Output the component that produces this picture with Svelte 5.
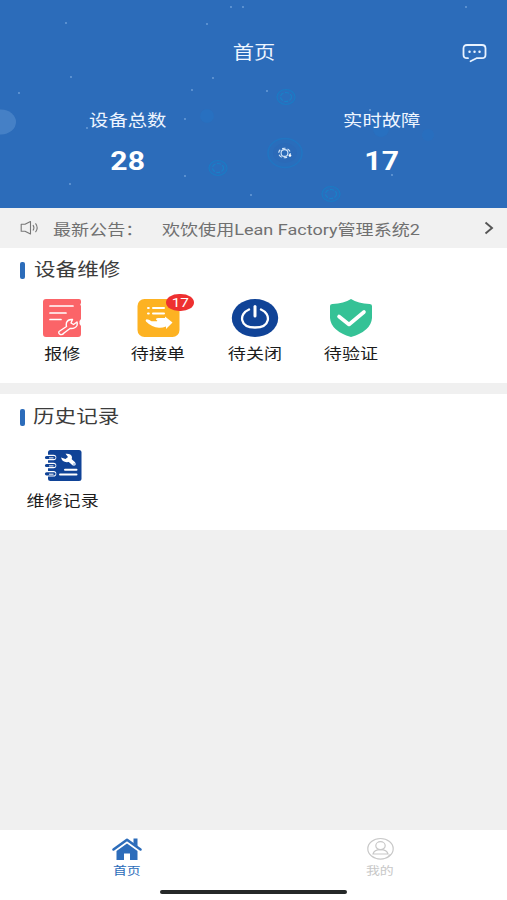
<script>
  const stats = [
    { label: '设备总数', value: 28 },
    { label: '实时故障', value: 17 },
  ];

  const repairs = [
    { icon: 'report', label: '报修' },
    { icon: 'accept', label: '待接单', badge: 17 },
    { icon: 'power', label: '待关闭' },
    { icon: 'shield', label: '待验证' },
  ];

  const history = [{ icon: 'book', label: '维修记录' }];

  const sections = [
    { title: '设备维修', items: repairs },
    { title: '历史记录', items: history },
  ];

  const stars = [
    [66, 23], [207, 24], [71, 77], [19, 93], [213, 78], [192, 90], [185, 119], [87, 128],
    [70, 184], [185, 176], [251, 195], [267, 91], [370, 110], [392, 175], [466, 7], [231, 7],
    [243, 7], [295, 161],
  ];

  const rings = [
    [218, 168, 9], [286, 97, 9], [331, 194, 9],
  ];

  let activeTab = $state('home');
</script>

<main>
  <header class="hero">
    <svg class="sky" width="507" height="208" viewBox="0 0 507 208">
      <ellipse cx="1" cy="122" rx="15" ry="12.5" fill="#5b91d0" opacity="0.55" />
      {#each stars as [x, y]}
        <circle cx={x} cy={y} r="0.9" fill="#8db8e8" opacity="0.7" />
      {/each}
      {#each rings as [x, y, r]}
        <ellipse cx={x} cy={y} rx={r} ry={r - 1.5} fill="#2a6ebd" stroke="#1c7ac4" stroke-width="1.2" />
        <ellipse cx={x} cy={y} rx="5.5" ry="4.5" fill="none" stroke="#1a80c8" stroke-width="1.2" stroke-dasharray="4 1.5" />
      {/each}
      <circle cx="207" cy="116" r="7" fill="#2374c5" opacity="0.5" />
      <circle cx="381" cy="129" r="8" fill="#2374c5" opacity="0.5" />
      <circle cx="428" cy="135" r="6" fill="#2374c5" opacity="0.4" />
      <ellipse cx="285" cy="153" rx="17" ry="14.5" fill="#2a6dbb" stroke="#2175c2" stroke-width="1.6" />
      <ellipse cx="285" cy="153" rx="12" ry="10" fill="#2b6ab8" />
      <g fill="none" stroke="#d7e8fa" stroke-width="1.1">
        <ellipse cx="284.5" cy="153" rx="3.4" ry="3.4" />
        <ellipse cx="284.5" cy="153" rx="5.8" ry="4.8" stroke-dasharray="3.4 2.100" />
      </g>
      <circle cx="290" cy="155.5" r="1.3" fill="#fff" />
    </svg>

    <div class="navbar">
      <h1><span class="wide">首页</span></h1>
      <svg class="chat" width="25" height="20" viewBox="0 0 25 20" fill="none" stroke="#e9f3ff" stroke-width="1.8" stroke-linejoin="round" stroke-linecap="round">
        <path d="M6 15.2H5Q1.500 15.200 1.500 11.700V5.500Q1.500 2 5 2H20Q23.500 2 23.500 5.500V11.700Q23.500 15.200 20 15.200H14.500L8.500 18.200" />
        <path d="M7.500 8.700h.1M12.500 8.700h.1M17.500 8.700h.1" stroke-width="2.4" />
      </svg>
    </div>

    <div class="stats">
      {#each stats as stat}
        <div class="stat">
          <span class="wide stat-label">{stat.label}</span>
          <span class="wide stat-value">{stat.value}</span>
        </div>
      {/each}
    </div>
  </header>

  <div class="notice">
    <svg width="20" height="16" viewBox="0 0 20 16" fill="none" stroke="#777" stroke-width="1.1">
      <path d="M5 4.300H1.200V11.200H5L10.500 14V1.500L5 4.300" stroke-linejoin="round" />
      <path d="M13 5Q14.800 7.700 13 10.500M15.500 3.300Q18.800 7.700 15.500 12.200" />
    </svg>
    <span class="wide notice-title">最新公告：</span>
    <span class="wide notice-text">欢饮使用Lean Factory管理系统2</span>
    <svg class="arrow" width="10" height="14" viewBox="0 0 10 14" fill="none" stroke="#555" stroke-width="1.9">
      <path d="M1.500 1.500L8 7L1.500 12.500" />
    </svg>
  </div>

  {#each sections as section}
    <section>
      <h2><i></i><span class="wide">{section.title}</span></h2>
      <div class="grid">
        {#each section.items as item}
          <div class="item">
            <div class="icon">
              {#if item.icon === 'report'}
                <svg width="48" height="40" viewBox="0 0 48 40">
                  <path d="M8 1H41Q43 1 43 3V5Q41.500 6.500 43 8V21L41.500 23V26L43 28V36Q43 39 40 39H8Q5 39 5 36V4Q5 1 8 1Z" fill="#fb6468" />
                  <path d="M12 8H35M12 15H28M12 21.500H23" stroke="#fff" stroke-width="1.7" stroke-linecap="round" />
                  <path d="M34.500 21.500Q30 21 28.500 24.500Q28 27 28.500 28.500L21 33.500Q20 35.500 22.500 36.500Q24.500 37 26 35L32 30.500Q37 31 39 27.500Q39.500 25.500 39 24L35.500 26.500L33 25Z" fill="#fb6468" stroke="#fff" stroke-width="1.4" stroke-linejoin="round" />
                </svg>
              {:else if item.icon === 'accept'}
                <svg width="48" height="40" viewBox="0 0 48 40">
                  <rect x="3.5" y="1" width="42" height="38" rx="7" fill="#fdb222" />
                  <path d="M14 10h.8M14 15.500h.8M19 10H30M19 15.500H30" stroke="#fff" stroke-width="2" stroke-linecap="round" />
                  <path d="M12.500 21.200Q14.500 21 17.500 23.300H23Q24 22.500 22 21.800Q21.500 20.300 24 20H31V18.500L38.500 24.500L32 31V28.500Q28.500 30 25 29.800Q18 29.500 12 23.500Q11 22 12.500 21.200Z" fill="#fff" />
                </svg>
              {:else if item.icon === 'power'}
                <svg width="48" height="40" viewBox="0 0 48 40" fill="none" stroke="#fff" stroke-linecap="round">
                  <ellipse cx="24" cy="20" rx="23.2" ry="19" fill="#104397" stroke="none" />
                  <path d="M18 11.500C7.500 16 8.500 29.500 24 29.500C39.500 29.500 40.500 16 30 11.500" stroke-width="2.3" />
                  <path d="M24 8.500V18" stroke-width="3" />
                </svg>
              {:else if item.icon === 'shield'}
                <svg width="48" height="40" viewBox="0 0 48 40">
                  <path d="M24 1Q31 5.500 42.500 6Q45 6 45 8V20Q44 33 24 39Q4 33 3 20V8Q3 6 5.500 6Q17 5.500 24 1Z" fill="#35c296" />
                  <path d="M12 18.500L22 26.500L37 14" fill="none" stroke="#fff" stroke-width="3.6" stroke-linecap="round" stroke-linejoin="round" />
                </svg>
              {:else}
                <svg width="48" height="40" viewBox="0 0 48 40">
                  <rect x="10" y="5" width="33.5" height="31" rx="2.5" fill="#104397" />
                  <path d="M9 12.500H15.500M9 20.500H15.500M9 28.800H15.500" stroke="#fff" stroke-width="5.6" stroke-linecap="round" />
                  <path d="M8.500 12.500H16M8.500 20.500H16M8.500 28.800H16" stroke="#104397" stroke-width="3.2" stroke-linecap="round" />
                  <path d="M11 12.900H15.500M11 20.900H15.500M11 29.200H15.500" stroke="#fff" stroke-width="1" />
                  <path d="M35.500 18.500L31 14.500" stroke="#fff" stroke-width="4" stroke-linecap="round" />
                  <path d="M27.500 8.800Q33 8.300 34 12Q34 15.500 30.500 17Q24.500 18 23 12.500L27.500 14L30 12Z" fill="#fff" />
                  <circle cx="36.3" cy="19.3" r="1.4" fill="#b5cae8" />
                  <path d="M27 24.700H38.500M22 29.500H38.500" stroke="#fff" stroke-width="2" stroke-linecap="round" />
                </svg>
              {/if}
              {#if item.badge}
                <span class="badge"><span class="wide">{item.badge}</span></span>
              {/if}
            </div>
            <span class="wide item-label">{item.label}</span>
          </div>
        {/each}
      </div>
    </section>
  {/each}

  <nav class="tabbar">
    <button class:active={activeTab === 'home'} onclick={() => (activeTab = 'home')}>
      <svg width="32" height="24" viewBox="0 0 32 24">
        <path d="M2.500 12.500L16 2.800L29.500 12.500" fill="none" stroke="currentColor" stroke-width="2.6" stroke-linecap="round" stroke-linejoin="round" />
        <path d="M22.500 1.500H26.500V9.500L22.500 6.500Z" fill="currentColor" />
        <path d="M16 6.500L26.500 14V23H19V16.500H13V23H5.500V14Z" fill="currentColor" />
      </svg>
      <span class="wide">首页</span>
    </button>
    <button class:active={activeTab === 'mine'} onclick={() => (activeTab = 'mine')}>
      <svg width="32" height="24" viewBox="0 0 32 24" fill="none" stroke="currentColor" stroke-width="1.2">
        <ellipse cx="16.5" cy="11.8" rx="12.7" ry="10.3" />
        <ellipse cx="16.5" cy="8.7" rx="4.7" ry="4" />
        <path d="M9 17Q10 12.700 16.500 12.700Q23 12.700 24 17ZM26.500 17.500L24.500 19" />
      </svg>
      <span class="wide">我的</span>
    </button>
    <div class="home-indicator"></div>
  </nav>
</main>

<style>
  :global(body) {
    margin: 0;
    background: #f0f0f0;
  }

  main {
    display: flex;
    flex-direction: column;
    height: 900px;
    background: #f0f0f0;
    font-family: Roboto, 'Noto Sans CJK SC', sans-serif;
    color: #333;
    overflow: hidden;
  }

  /* glyphs are wider than they are tall */
  .wide {
    display: inline-block;
    transform: scaleX(1.18);
    white-space: nowrap;
  }

  .hero {
    position: relative;
    height: 208px;
    background: #2c6cba;
    color: #eef5ff;
    flex-shrink: 0;
  }

  .sky {
    position: absolute;
    top: 0;
    left: 0;
  }

  .navbar {
    position: relative;
    display: grid;
    grid-template-columns: 1fr auto 1fr;
    align-items: center;
    padding: 39px 20px 0 20px;
    height: 28px;
  }

  h1 {
    grid-column: 2;
    margin: 0;
    font-size: 18px;
    font-weight: 400;
    line-height: 28px;
  }

  .chat {
    justify-self: end;
  }

  .stats {
    position: relative;
    display: grid;
    grid-template-columns: 254px 254px;
    padding: 42px 0 0 1px;
  }

  .stat {
    display: flex;
    flex-direction: column;
    align-items: center;
  }

  .stat-label {
    font-size: 16.4px;
    line-height: 24px;
  }

  .stat-value {
    margin-top: 13px;
    font-size: 25.5px;
    font-weight: 700;
    line-height: 30px;
    color: #fff;
  }

  .notice {
    display: flex;
    align-items: center;
    height: 40px;
    padding: 0 13px 0 20px;
    background: #f1f1f1;
    color: #707070;
    font-size: 15.3px;
    flex-shrink: 0;
  }

  .notice .wide {
    transform-origin: left center;
    line-height: 38px;
    margin-top: 3px;
  }

  .notice-title {
    width: 97px;
    margin-left: 13px;
  }

  .notice-text {
    margin-left: 12px;
  }

  .arrow {
    margin-left: auto;
  }

  section {
    background: #fff;
    height: 135px;
    margin-bottom: 11px;
    flex-shrink: 0;
  }

  section + section {
    height: 136px;
  }

  h2 {
    display: flex;
    align-items: center;
    gap: 9px;
    height: 28px;
    margin: 0;
    padding: 8px 0 0 20px;
    font-size: 18.3px;
    font-weight: 400;
    line-height: 28px;
    color: #3c3c3c;
  }

  h2 i {
    width: 5px;
    height: 17px;
    border-radius: 2px;
    background: #2c6cba;
  }

  h2 .wide {
    transform-origin: left center;
    margin-top: -1px;
  }

  section + section h2 {
    gap: 8px;
    padding-top: 9px;
  }

  .grid {
    display: grid;
    grid-template-columns: repeat(5, 96.3px);
    padding: 14px 0 0 14px;
  }

  .item {
    display: flex;
    flex-direction: column;
    align-items: center;
  }

  .icon {
    position: relative;
    height: 40px;
  }

  .icon svg {
    display: block;
  }

  .badge {
    position: absolute;
    top: -4px;
    left: 32px;
    width: 28px;
    height: 17px;
    border-radius: 14px / 9px;
    background: #ee3030;
    color: #fff;
    font-size: 13px;
    line-height: 17px;
    text-align: center;
  }

  .item-label {
    margin-top: 4px;
    font-size: 15.3px;
    line-height: 25px;
    color: #1c1c1c;
  }

  .tabbar {
    position: relative;
    display: grid;
    grid-template-columns: 1fr 1fr;
    height: 70px;
    margin-top: auto;
    background: #fff;
    flex-shrink: 0;
  }

  button {
    display: flex;
    flex-direction: column;
    align-items: center;
    padding: 7px 0 0;
    border: none;
    background: none;
    font-family: inherit;
    font-size: 11.8px;
    line-height: 20px;
    color: #c8c8c8;
  }

  button.active {
    color: #2c6cba;
  }

  .home-indicator {
    position: absolute;
    left: 160px;
    bottom: 6px;
    width: 187px;
    height: 4px;
    border-radius: 2px;
    background: #252828;
  }
</style>
